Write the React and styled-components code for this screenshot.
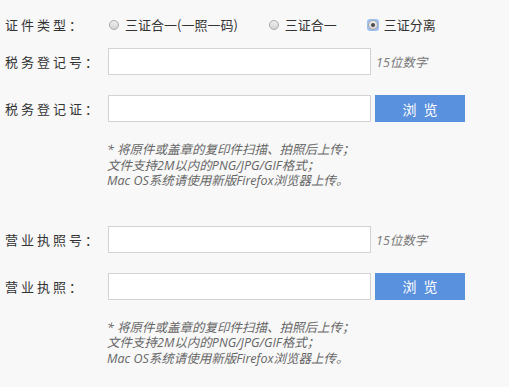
import styled, { createGlobalStyle } from 'styled-components'

const GlobalStyle = createGlobalStyle`
  html, body {
    margin: 0;
    padding: 0;
    background: #f8f8f8;
  }
  body {
    font-family: "Noto Sans", "Noto Sans CJK SC", sans-serif;
    color: #333;
  }
`

const Page = styled.div`
  width: 509px;
  height: 387px;
  padding: 11px 0 0 5px;
  box-sizing: border-box;
  background: #f8f8f8;
  overflow: hidden;
`

const Row = styled.div`
  display: flex;
  align-items: center;
  height: 27px;
  margin-bottom: ${({ $gap }) => $gap}px;
`

const Label = styled.span`
  width: 103px;
  flex: none;
  font-family: "Noto Sans CJK SC", sans-serif;
  font-size: 13px;
  letter-spacing: 3px;
  color: #333;
  white-space: nowrap;
`

const RadioGroup = styled.div`
  display: flex;
  align-items: center;
`

const RadioOption = styled.label`
  display: flex;
  align-items: center;
  margin-right: ${({ $last }) => ($last ? 0 : 30)}px;
  font-family: "Noto Sans CJK SC", sans-serif;
  font-size: 13px;
  color: #333;
  white-space: nowrap;
`

const RadioMark = styled.span`
  position: relative;
  width: 12px;
  height: 12px;
  margin-right: 5px;
  box-sizing: border-box;
  border-radius: 3px;
  display: flex;
  align-items: center;
  justify-content: center;
  background: ${({ $checked }) => ($checked ? '#9dc0f3' : 'transparent')};

  &::before {
    content: '';
    width: 10px;
    height: 10px;
    box-sizing: border-box;
    border-radius: 50%;
    border: 1px solid #a9a9a9;
    background: linear-gradient(#f0f0f0, #d2d2d2);
  }

  &::after {
    content: '';
    display: ${({ $checked }) => ($checked ? 'block' : 'none')};
    position: absolute;
    left: 4px;
    top: 4px;
    width: 4px;
    height: 4px;
    border-radius: 50%;
    background: #4a4a4a;
  }
`

const TextInput = styled.input`
  width: 263px;
  height: 27px;
  box-sizing: border-box;
  margin: 0;
  padding: 0 6px;
  border: 1px solid #d3d3d3;
  background: #fff;
  outline: none;
  font-size: 13px;
`

const Hint = styled.span`
  margin-left: 5px;
  font-family: "Open Sans", "Noto Sans CJK SC", sans-serif;
  font-size: 12.5px;
  font-style: italic;
  color: #777;
`

const BrowseButton = styled.button`
  width: 90px;
  height: 27px;
  margin-left: 4px;
  border: 0;
  padding: 0 0 0 2px;
  background: #5a91de;
  color: #fff;
  font-family: "Noto Sans CJK SC", sans-serif;
  font-size: 14px;
  letter-spacing: 2px;
  cursor: pointer;
`

const Notes = styled.div`
  margin: 0 0 ${({ $gap }) => $gap}px 102px;
  font-family: "Open Sans", "Noto Sans CJK SC", sans-serif;
  font-size: 12.5px;
  font-style: italic;
  line-height: 15.5px;
  color: #666;
`

const radios = [
  { text: '三证合一(一照一码)', checked: false },
  { text: '三证合一', checked: false },
  { text: '三证分离', checked: true },
]

function UploadNotes({ gap }) {
  return (
    <Notes $gap={gap}>
      <div>* 将原件或盖章的复印件扫描、拍照后上传；</div>
      <div>文件支持2M以内的PNG/JPG/GIF格式；</div>
      <div>Mac OS系统请使用新版Firefox浏览器上传。</div>
    </Notes>
  )
}

export default function App() {
  return (
    <Page>
      <GlobalStyle />
      <Row $gap={10}>
        <Label>证件类型：</Label>
        <RadioGroup>
          {radios.map((r, i) => (
            <RadioOption key={r.text} $last={i === radios.length - 1}>
              <RadioMark $checked={r.checked} />
              {r.text}
            </RadioOption>
          ))}
        </RadioGroup>
      </Row>
      <Row $gap={20}>
        <Label>税务登记号：</Label>
        <TextInput type="text" />
        <Hint>15位数字</Hint>
      </Row>
      <Row $gap={20}>
        <Label>税务登记证：</Label>
        <TextInput type="text" />
        <BrowseButton>浏 览</BrowseButton>
      </Row>
      <UploadNotes gap={37} />
      <Row $gap={20}>
        <Label>营业执照号：</Label>
        <TextInput type="text" />
        <Hint>15位数字</Hint>
      </Row>
      <Row $gap={20}>
        <Label>营业执照：</Label>
        <TextInput type="text" />
        <BrowseButton>浏 览</BrowseButton>
      </Row>
      <UploadNotes gap={0} />
    </Page>
  )
}
